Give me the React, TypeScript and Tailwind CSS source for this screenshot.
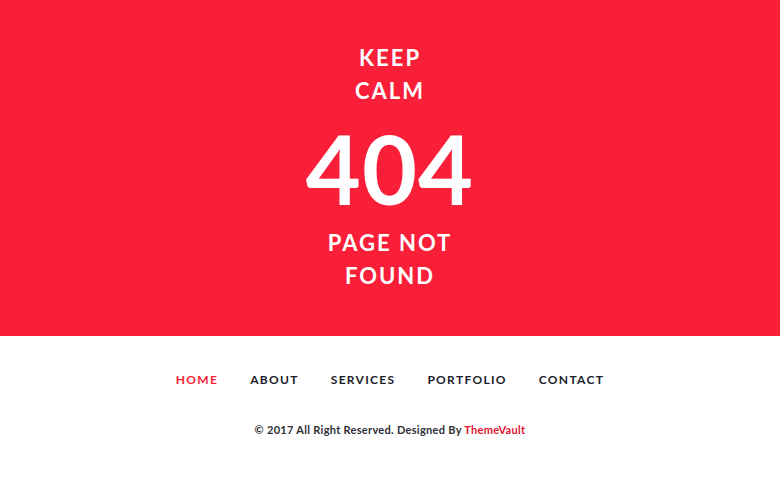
export default function App() {
  const links = ['HOME', 'ABOUT', 'SERVICES', 'PORTFOLIO', 'CONTACT'];
  return (
    <div className="w-[780px] h-[480px] bg-white font-['Lato','Liberation_Sans',sans-serif] overflow-hidden">
      {/* red hero */}
      <section className="h-[336px] bg-[#f91f39] pt-[41px] flex flex-col items-center text-white">
        <h3 className="text-[22px] leading-[33px] font-bold tracking-[2px] text-center">
          KEEP
          <br />
          CALM
        </h3>
        <h1 className="mt-[14px] text-[95px] leading-[95px] font-bold tracking-[1px]">404</h1>
        <h3 className="mt-[10px] text-[22px] leading-[33px] font-bold tracking-[2px] text-center">
          PAGE NOT
          <br />
          FOUND
        </h3>
      </section>

      {/* footer */}
      <footer className="pt-[34px] flex flex-col items-center">
        <nav className="flex gap-[32px] text-[12px] leading-[20px] font-bold tracking-[1.3px]">
          {links.map((l, i) => (
            <a key={l} className={i === 0 ? 'text-[#f91f39]' : 'text-[#1b1d2a]'}>
              {l}
            </a>
          ))}
        </nav>
        <p className="mt-[32px] text-[11px] leading-[16px] font-bold tracking-[0.3px] text-[#2e2f36]">
          © 2017 All Right Reserved. Designed By <span className="text-[#e3122f]">ThemeVault</span>
        </p>
      </footer>
    </div>
  );
}
